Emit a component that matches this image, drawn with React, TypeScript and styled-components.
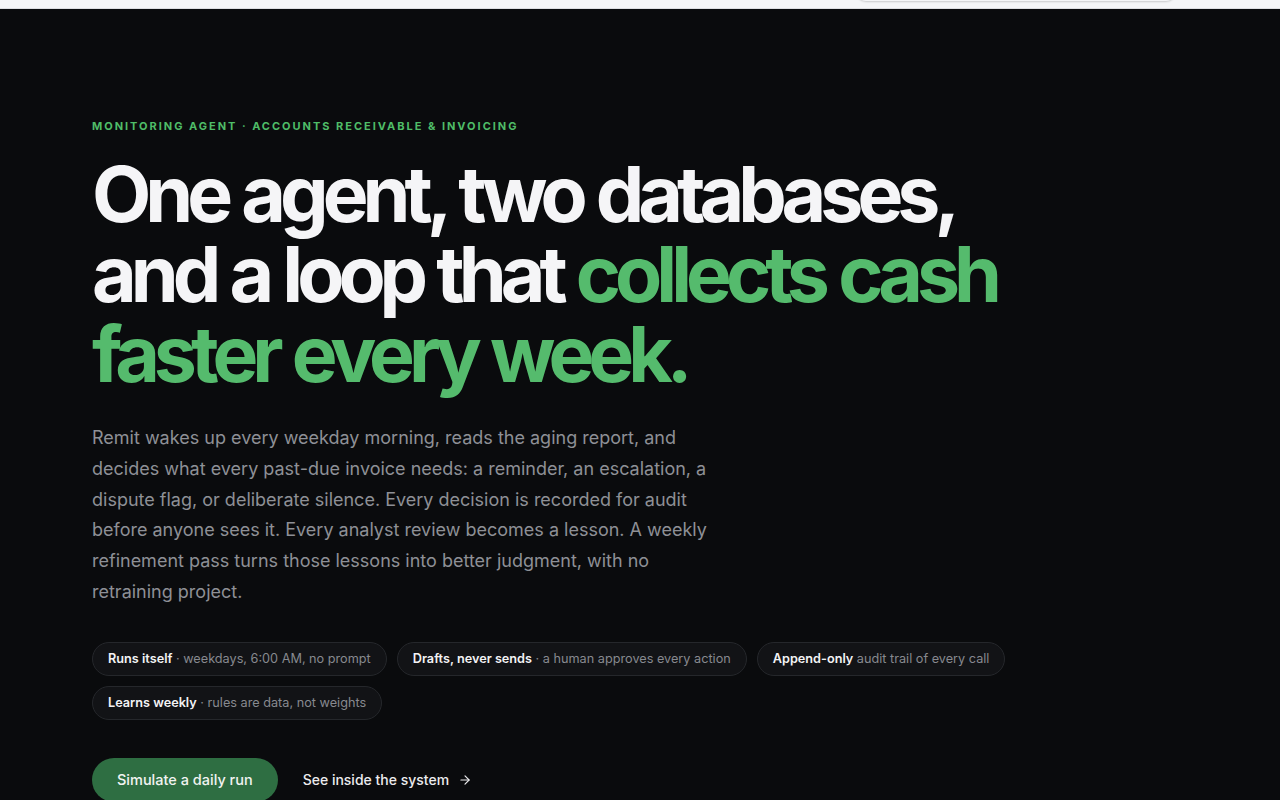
import { FC } from "react"
import styled, { createGlobalStyle } from "styled-components"

const GlobalStyle = createGlobalStyle`
  html, body {
    margin: 0;
    padding: 0;
    background: #0a0b0d;
  }
  body {
    font-family: Inter, "Noto Sans", sans-serif;
    -webkit-font-smoothing: antialiased;
  }
  * {
    box-sizing: border-box;
  }
`

const TopBar = styled.div`
  height: 9px;
  background: #f4f5f7;
  border-bottom: 1px solid #dcdde1;
  display: flex;
  justify-content: flex-end;
  padding-right: 104px;
  overflow: hidden;
`

const NavPill = styled.div`
  width: 320px;
  height: 20px;
  margin-top: -19px;
  border-radius: 0 0 10px 10px;
  background: #f4f5f7;
  box-shadow: 0 1px 2px rgba(0, 0, 0, 0.18);
`

const Hero = styled.section`
  background: #0a0b0d;
  min-height: 791px;
  padding: 111px 92px 0;
  display: flex;
  flex-direction: column;
`

const Eyebrow = styled.div`
  font-size: 11px;
  font-weight: 700;
  letter-spacing: 0.18em;
  text-transform: uppercase;
  color: #4fbd68;
  line-height: 12px;
`

const Headline = styled.h1`
  margin: 22px 0 0;
  font-size: 77px;
  font-weight: 700;
  line-height: 80px;
  letter-spacing: -0.078em;
  word-spacing: 2px;
  color: #f5f5f7;
  max-width: 930px;
`

const Accent = styled.span`
  color: #55bb6d;
`

const Lead = styled.p`
  margin: 29px 0 0;
  max-width: 624px;
  font-size: 18px;
  line-height: 30.8px;
  color: #8e9096;
`

const ChipList = styled.div`
  margin-top: 34px;
  display: flex;
  flex-wrap: wrap;
  gap: 10px;
  max-width: 925px;
`

const Chip = styled.div`
  height: 34px;
  display: flex;
  align-items: center;
  padding: 0 15px;
  border-radius: 999px;
  border: 1px solid #25272b;
  background: #121316;
  font-size: 12.7px;
  color: #87898f;
  white-space: pre;

  b {
    font-weight: 600;
    color: #f2f2f4;
  }
`

const Actions = styled.div`
  margin-top: 38px;
  display: flex;
  align-items: center;
  gap: 25px;
`

const PrimaryButton = styled.button`
  height: 44px;
  padding: 0 25px;
  border: none;
  border-radius: 999px;
  background: #2e6e42;
  color: #f1f3f1;
  font-family: inherit;
  font-size: 14.5px;
  font-weight: 500;
  cursor: pointer;
`

const GhostLink = styled.a`
  display: flex;
  align-items: center;
  gap: 9px;
  color: #ececee;
  font-size: 14px;
  font-weight: 500;
  text-decoration: none;
  cursor: pointer;
`

const chips = [
  { strong: "Runs itself", rest: " · weekdays, 6:00 AM, no prompt" },
  { strong: "Drafts, never sends", rest: " · a human approves every action" },
  { strong: "Append-only", rest: " audit trail of every call" },
  { strong: "Learns weekly", rest: " · rules are data, not weights" },
]

const App: FC = () => (
  <>
    <GlobalStyle />
    <TopBar>
      <NavPill />
    </TopBar>
    <Hero>
      <Eyebrow>Monitoring agent · Accounts receivable &amp; invoicing</Eyebrow>
      <Headline>
        One agent, two databases, and a loop that{" "}
        <Accent>collects cash faster every week.</Accent>
      </Headline>
      <Lead>
        Remit wakes up every weekday morning, reads the aging report, and decides what
        every past-due invoice needs: a reminder, an escalation, a dispute flag, or
        deliberate silence. Every decision is recorded for audit before anyone sees it.
        Every analyst review becomes a lesson. A weekly refinement pass turns those
        lessons into better judgment, with no retraining project.
      </Lead>
      <ChipList>
        {chips.map(({ strong, rest }) => (
          <Chip key={strong}>
            <b>{strong}</b>
            {rest}
          </Chip>
        ))}
      </ChipList>
      <Actions>
        <PrimaryButton>Simulate a daily run</PrimaryButton>
        <GhostLink>
          See inside the system
          <svg width="14" height="14" viewBox="0 0 24 24" fill="none" stroke="currentColor" strokeWidth="2" strokeLinecap="round" strokeLinejoin="round">
            <path d="M5 12h14" />
            <path d="m12 5 7 7-7 7" />
          </svg>
        </GhostLink>
      </Actions>
    </Hero>
  </>
)

export default App
